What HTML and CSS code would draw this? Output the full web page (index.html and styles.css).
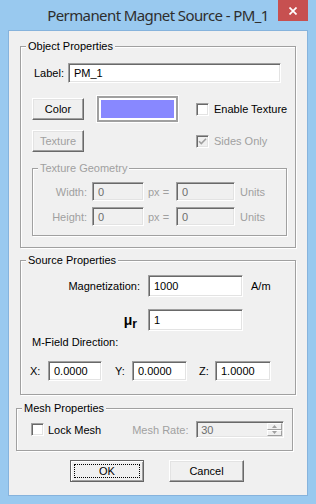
FILE: index.html
```html
<!DOCTYPE html>
<html>
<head>
<meta charset="utf-8">
<link rel="stylesheet" href="styles.css">
</head>
<body>
<div class="window">
  <div class="titlebar">
    <span></span>
    <span class="title">Permanent Magnet Source - PM_1</span>
    <span class="close"><svg width="8" height="8" viewBox="0 0 8 8"><path d="M0.5 0.5L7.5 7.5M7.5 0.5L0.5 7.5" stroke="#fff" stroke-width="1.7"/></svg></span>
  </div>
  <div class="client">
    <fieldset class="group g1">
      <legend>Object Properties</legend>
      <div class="row r-label">
        <span class="lbl-label">Label:</span>
        <span class="edit w-label">PM_1</span>
      </div>
      <div class="row r-color">
        <span class="btn b-small">Color</span>
        <span class="swatch"><span class="swatch-in"></span></span>
        <span class="check c-enable"><span class="box"></span>Enable Texture</span>
      </div>
      <div class="row r-tex">
        <span class="btn b-small disabled">Texture</span>
        <span class="check c-sides disabled"><span class="box checked"><svg width="9" height="9" viewBox="0 0 9 9"><path d="M1 4.2L3.3 6.5L8 1.8" stroke="#a0a0a0" stroke-width="1.6" fill="none"/></svg></span>Sides Only</span>
      </div>
      <fieldset class="group g-tex disabled">
        <legend>Texture Geometry</legend>
        <div class="row r-geo r-geo1">
          <span class="lbl-geo">Width:</span>
          <span class="edit dis w-geo1">0</span>
          <span class="px">px =</span>
          <span class="edit dis w-geo2">0</span>
          <span class="units">Units</span>
        </div>
        <div class="row r-geo r-geo2">
          <span class="lbl-geo">Height:</span>
          <span class="edit dis w-geo1">0</span>
          <span class="px">px =</span>
          <span class="edit dis w-geo2">0</span>
          <span class="units">Units</span>
        </div>
      </fieldset>
    </fieldset>

    <fieldset class="group g2">
      <legend>Source Properties</legend>
      <div class="row r-mag">
        <span class="lbl-src">Magnetization:</span>
        <span class="edit tall w-src">1000</span>
        <span class="unit-am">A/m</span>
      </div>
      <div class="row r-mu">
        <span class="lbl-src mu">μ<sub>r</sub></span>
        <span class="edit tall w-src">1</span>
      </div>
      <div class="r-dir">M-Field Direction:</div>
      <div class="row r-xyz">
        <span class="lbl-x">X:</span>
        <span class="edit w-x">0.0000</span>
        <span class="lbl-y">Y:</span>
        <span class="edit w-y">0.0000</span>
        <span class="lbl-z">Z:</span>
        <span class="edit w-z">1.0000</span>
      </div>
    </fieldset>

    <fieldset class="group g3">
      <legend>Mesh Properties</legend>
      <div class="row r-mesh">
        <span class="check c-lock"><span class="box"></span>Lock Mesh</span>
        <span class="mesh-rate">Mesh Rate:</span>
        <span class="edit dis spin"><span class="spin-val">30</span>
          <span class="spin-btns">
            <span class="sbtn"><svg width="5" height="3" viewBox="0 0 5 3"><path d="M2.5 0L5 3H0Z" fill="#a0a0a0"/></svg></span>
            <span class="sbtn"><svg width="5" height="3" viewBox="0 0 5 3"><path d="M0 0H5L2.5 3Z" fill="#a0a0a0"/></svg></span>
          </span>
        </span>
      </div>
    </fieldset>

    <div class="row r-buttons">
      <span class="btn b-ok"><span class="focus">OK</span></span>
      <span class="btn b-cancel">Cancel</span>
    </div>
  </div>
</div>
</body>
</html>
```
FILE: styles.css
```css
* { box-sizing: border-box; }
html, body { margin: 0; padding: 0; }
body {
  width: 316px;
  height: 504px;
  overflow: hidden;
  font-family: "Liberation Sans", Arial, sans-serif;
  font-size: 11px;
  color: #000;
}
.window {
  width: 316px;
  height: 504px;
  background: #99c9ef;
  padding: 0 8px 8px 8px;
  display: flex;
  flex-direction: column;
}
.titlebar {
  height: 30px;
  display: grid;
  grid-template-columns: 30px 1fr 30px;
  align-items: start;
}
.title {
  font-family: "Noto Sans", "Open Sans", sans-serif;
  font-size: 15px;
  letter-spacing: -0.6px;
  line-height: 20px;
  padding-top: 5px;
  color: #2e2e2e;
  text-align: center;
  white-space: nowrap;
}
.close {
  width: 30px;
  height: 21px;
  background: #c75050;
  display: flex;
  align-items: center;
  justify-content: center;
}
.client {
  flex: 1;
  background: #f0f0f0;
  border: 1px solid #86b3dc;
  display: flex;
  flex-direction: column;
  align-items: flex-start;
}
.row {
  display: flex;
  align-items: center;
  white-space: nowrap;
}

/* group boxes */
.group {
  margin: 0;
  padding: 0;
  min-width: 0;
  border: 1px solid #a0a0a0;
  box-shadow: inset 1px 1px 0 #fff, 1px 1px 0 #fff;
  display: flex;
  flex-direction: column;
  align-items: flex-start;
}
.group legend {
  padding: 0 2px;
  margin-left: 5px;
  line-height: 13px;
  height: 13px;
  background: #f0f0f0;
}
.g1 { margin: 9px 0 0 11px; width: 276px; padding-bottom: 11px; }
.g2 { margin: 6px 0 0 11px; width: 276px; padding-bottom: 13px; }
.g3 { margin: 7px 0 0 7px; width: 277px; padding-bottom: 12px; }
.g-tex { margin: 10px 0 0 11px; width: 255px; padding-bottom: 9px; }
.disabled { color: #a0a0a0; }

/* edits */
.edit {
  display: flex;
  align-items: center;
  height: 20px;
  padding-left: 5px;
  background: #fff;
  border: 1px solid;
  border-color: #a0a0a0 #fff #fff #a0a0a0;
  box-shadow: inset 1px 1px 0 #696969, inset -1px -1px 0 #e3e3e3;
}
.edit.dis { background: #f0f0f0; color: #6d6d6d; }
.edit.tall { height: 22px; }

/* buttons */
.btn {
  display: flex;
  align-items: center;
  justify-content: center;
  height: 22px;
  background: #f0f0f0;
  border: 1px solid;
  border-color: #fff #696969 #696969 #fff;
  box-shadow: inset -1px -1px 0 #a0a0a0, inset 1px 1px 0 #e3e3e3;
}
.btn.disabled { color: #a0a0a0; }
.b-small { width: 52px; }

/* checkbox */
.check { display: flex; align-items: center; }
.box {
  width: 13px;
  height: 13px;
  margin-right: 5px;
  background: #fff;
  border: 1px solid;
  border-color: #a0a0a0 #fff #fff #a0a0a0;
  box-shadow: inset 1px 1px 0 #696969, inset -1px -1px 0 #e3e3e3;
  display: flex;
  align-items: center;
  justify-content: center;
}
.check.disabled .box { background: #f0f0f0; }

/* object properties rows */
.r-label { margin-top: 10px; height: 20px; padding-left: 13px; }
.lbl-label { width: 34px; }
.w-label { width: 213px; }

.r-color { margin-top: 13px; height: 26px; padding-left: 11px; }
.swatch {
  margin-left: 13px;
  width: 81px;
  height: 26px;
  padding: 2px;
  background: #fff;
  border: 2px solid #a0a0a0;
  box-shadow: 0 0 0 1px #fff;
}
.swatch-in { display: block; width: 100%; height: 100%; background: #8888ff; }
.c-enable { margin-left: 18px; }

.r-tex { margin-top: 8px; height: 22px; padding-left: 11px; }
.c-sides { margin-left: 112px; }

.r-geo { height: 19px; }
.r-geo1 { margin-top: 7px; }
.r-geo2 { margin-top: 6px; }
.r-geo .edit { height: 19px; }
.lbl-geo { width: 54px; text-align: right; margin-right: 5px; }
.w-geo1 { width: 52px; }
.px { margin-left: 4px; width: 28px; }
.w-geo2 { width: 59px; }
.units { margin-left: 5px; }

/* source properties */
.r-mag { margin-top: 8px; height: 22px; }
.r-mu { margin-top: 12px; height: 22px; }
.lbl-src { width: 119px; text-align: right; margin-right: 8px; }
.mu {
  font-weight: bold;
  font-size: 14px;
  padding-right: 3px;
  line-height: 14px;
}
.mu sub { font-size: 12px; vertical-align: -3px; line-height: 0; }
.w-src { width: 95px; }
.unit-am { margin-left: 8px; }
.r-dir { margin-top: 5px; line-height: 13px; padding-left: 11px; }
.r-xyz { margin-top: 12px; height: 20px; padding-left: 9px; }
.lbl-x { width: 18px; }
.w-x { width: 54px; }
.lbl-y { margin-left: 13px; width: 17px; }
.w-y { width: 55px; }
.lbl-z { margin-left: 12px; width: 16px; }
.w-z { width: 56px; }

/* mesh */
.r-mesh { margin-top: 6px; height: 17px; padding-left: 14px; }
.c-lock .box { margin-right: 4px; }
.mesh-rate { margin-left: 31px; color: #a0a0a0; width: 64px; }
.spin {
  width: 88px;
  height: 17px;
  padding-left: 4px;
  justify-content: space-between;
  padding-right: 1px;
}
.spin-btns { display: flex; flex-direction: column; width: 15px; height: 13px; }
.sbtn {
  flex: 1;
  display: flex;
  align-items: center;
  justify-content: center;
  background: #f0f0f0;
  border: 1px solid;
  border-color: #fff #a0a0a0 #a0a0a0 #fff;
}

/* buttons */
.r-buttons { margin-top: 9px; height: 22px; padding-left: 61px; }
.b-ok {
  width: 74px;
  border-color: #646464;
  box-shadow: inset 1px 1px 0 #fff, inset -1px -1px 0 #a0a0a0;
  padding: 3px;
}
.focus {
  width: 100%;
  height: 100%;
  display: flex;
  align-items: center;
  justify-content: center;
  outline: 1px dotted #000;
  outline-offset: -1px;
}
.b-cancel { width: 75px; margin-left: 25px; }
```
